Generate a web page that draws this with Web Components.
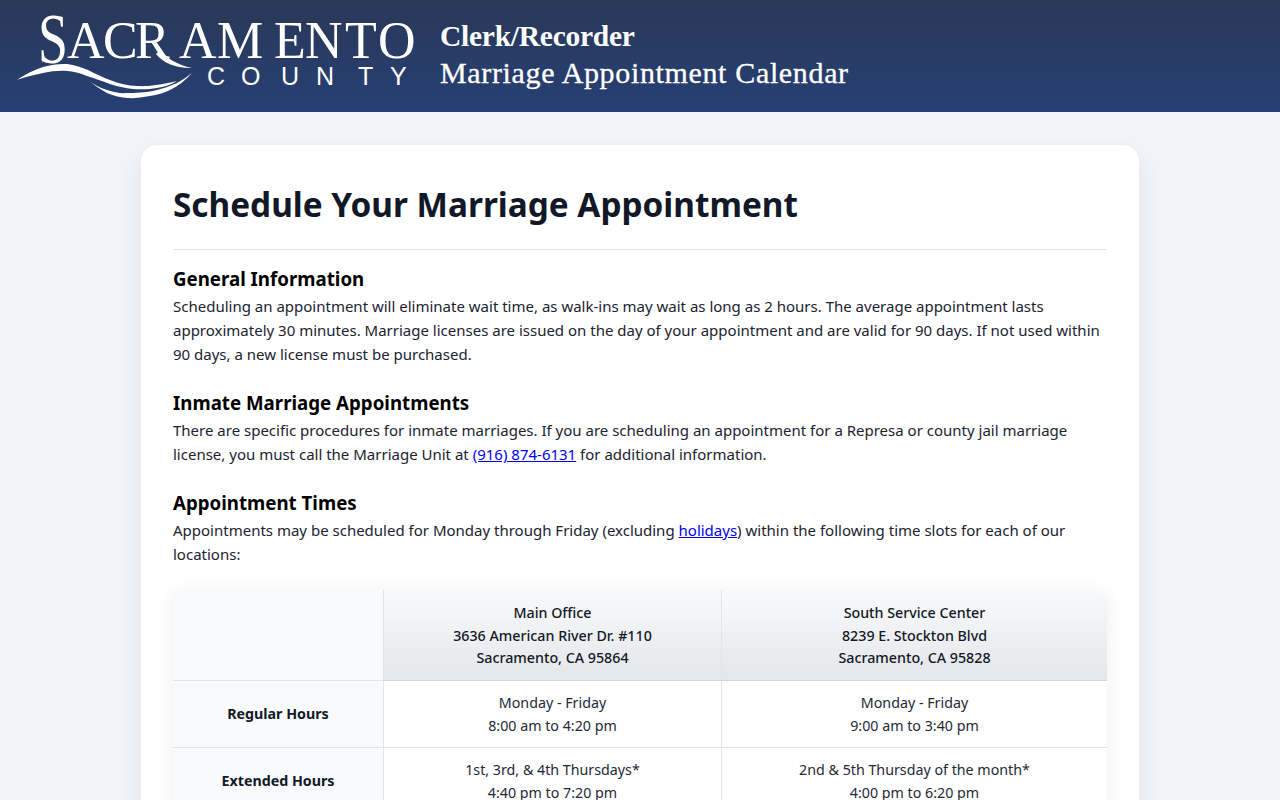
<!DOCTYPE html>
<html lang="en">
<head>
<meta charset="utf-8">
<title>Marriage Appointment Calendar</title>
<style>
	html, body { margin: 0; padding: 0; }
	body {
		background: #f3f4f9;
		font-family: "Noto Sans", "Open Sans", sans-serif;
		color: #111827;
	}
	a { color: #0000ee; }
</style>
</head>
<body>
<county-header>
	<span slot="dept">Clerk/Recorder</span>
	<span slot="app">Marriage Appointment Calendar</span>
</county-header>

<page-card>
	<span slot="title">Schedule Your Marriage Appointment</span>

	<info-section heading="General Information">Scheduling an appointment will eliminate wait time, as walk-ins may wait as long as 2 hours. The average appointment lasts approximately 30 minutes. Marriage licenses are issued on the day of your appointment and are valid for 90 days. If not used within 90 days, a new license must be purchased.</info-section>

	<info-section heading="Inmate Marriage Appointments">There are specific procedures for inmate marriages. If you are scheduling an appointment for a Represa or county jail marriage license, you must call the Marriage Unit at <a href="tel:9168746131">(916) 874-6131</a> for additional information.</info-section>

	<info-section heading="Appointment Times">Appointments may be scheduled for Monday through Friday (excluding <a href="#holidays">holidays</a>) within the following time slots for each of our locations:</info-section>

	<hours-table>
		<hours-cell kind="corner"></hours-cell>
		<hours-cell kind="head">Main Office<br>3636 American River Dr. #110<br>Sacramento, CA 95864</hours-cell>
		<hours-cell kind="head">South Service Center<br>8239 E. Stockton Blvd<br>Sacramento, CA 95828</hours-cell>

		<hours-cell kind="label">Regular Hours</hours-cell>
		<hours-cell>Monday - Friday<br>8:00 am to 4:20 pm</hours-cell>
		<hours-cell>Monday - Friday<br>9:00 am to 3:40 pm</hours-cell>

		<hours-cell kind="label">Extended Hours</hours-cell>
		<hours-cell>1st, 3rd, &amp; 4th Thursdays*<br>4:40 pm to 7:20 pm</hours-cell>
		<hours-cell>2nd &amp; 5th Thursday of the month*<br>4:00 pm to 6:20 pm</hours-cell>
	</hours-table>
</page-card>

<script>
(function() {
	const headerTemplate = document.createElement("template");
	headerTemplate.innerHTML = `
		<style>
		:host {
			display: flex;
			align-items: center;
			gap: 22px;
			height: 112px;
			padding-left: 16px;
			box-sizing: border-box;
			background: linear-gradient(180deg, #2a3857 0%, #264075 100%);
			color: #fff;
		}
		svg { display: block; flex: none; }
		.titles {
			display: flex;
			flex-direction: column;
			gap: 3px;
			font-family: "Liberation Serif", serif;
			font-size: 30px;
			line-height: 33px;
			margin-top: -3px;
		}
		.dept { font-size: 29.5px; font-weight: 700; letter-spacing: -0.25px; }
		.app { letter-spacing: 0.65px; -webkit-text-stroke: 0.3px #fff; }
		</style>
		<svg width="402" height="112" viewBox="16 0 402 112">
			<text x="38" y="63" textLength="30" lengthAdjust="spacingAndGlyphs" font-family="Liberation Serif" font-size="72" fill="#fff">S</text>
			<text x="67 103 135 179 217 274 305 345 378" y="58" font-family="Liberation Serif" font-size="52" fill="#fff">ACRAMENTO</text>
			<text x="207 241 281 316 358 390" y="85" font-family="Liberation Sans" font-size="25" fill="#fff">COUNTY</text>
			<!-- tail of the R -->
			<path fill="#fff" d="M160 50C167 58 177 65 192 68C176 68.500 163 63 156 54Z"/>
			<path fill="#fff" d="M17 79.700C26 74 34 70 43 67C52 64.500 60 63.500 67 64C75 65 82 67.500 88 70C96 74 103 77.500 110 80C119 83.500 128 86 137 86C146 86.500 155 86 177 81C170 85 164 87 157 88C149 89.500 141 89.500 133 89C125 88 117 86.500 110 84C102 81 94 78 87 76C80 73 73 71.500 67 71C59 70.500 51 71.500 43 73C34 75 26 77 17 79.700Z"/>
			<path fill="#fff" d="M88 80C94 84.500 100 88 107 90C114 92.500 121 93.500 127 93C136 93 145 92.500 153 91C162 89 170 86 177 83C182 80 187 77 192 73C186 80 178 86 170 90C164 93 157 95 150 96C142 97.500 134 98.500 127 98C119 97.500 113 95.500 107 93C100 89 94 85 88 80Z"/>
		</svg>
		<div class="titles">
			<span class="dept"><slot name="dept"></slot></span>
			<span class="app"><slot name="app"></slot></span>
		</div>
	`;

	class CountyHeader extends HTMLElement {
		constructor() {
			super();
			this.attachShadow({ mode: "open" }).appendChild(headerTemplate.content.cloneNode(true));
		}
	}
	customElements.define("county-header", CountyHeader);

	const cardTemplate = document.createElement("template");
	cardTemplate.innerHTML = `
		<style>
		:host {
			display: block;
			box-sizing: border-box;
			width: 998px;
			margin: 33px auto 32px;
			padding: 32px;
			background: #fff;
			border-radius: 16px;
			box-shadow: 0 10px 30px rgba(17, 24, 39, 0.08);
		}
		h1 {
			margin: 0 0 16px;
			padding-bottom: 18px;
			border-bottom: 1px solid #e2e4e8;
			font-size: 33.35px;
			line-height: 54px;
			font-weight: 700;
			color: #111827;
		}
		</style>
		<h1><slot name="title"></slot></h1>
		<slot></slot>
	`;

	class PageCard extends HTMLElement {
		constructor() {
			super();
			this.attachShadow({ mode: "open" }).appendChild(cardTemplate.content.cloneNode(true));
		}
	}
	customElements.define("page-card", PageCard);

	const sectionTemplate = document.createElement("template");
	sectionTemplate.innerHTML = `
		<style>
		:host {
			display: block;
			margin-bottom: 24px;
			font-size: 15px;
			line-height: 24px;
			color: #1b2330;
		}
		h2 {
			margin: 0;
			padding-bottom: 2px;
			font-size: 18.7px;
			line-height: 26px;
			font-weight: 700;
			color: #000;
		}
		</style>
		<h2></h2>
		<div><slot></slot></div>
	`;

	class InfoSection extends HTMLElement {
		constructor() {
			super();
			this.attachShadow({ mode: "open" }).appendChild(sectionTemplate.content.cloneNode(true));
		}
		connectedCallback() {
			this.shadowRoot.querySelector("h2").textContent = this.getAttribute("heading");
		}
	}
	customElements.define("info-section", InfoSection);

	const tableTemplate = document.createElement("template");
	tableTemplate.innerHTML = `
		<style>
		:host {
			display: grid;
			grid-template-columns: 210px 338px 386px;
			border-radius: 12px;
			overflow: hidden;
			box-shadow: 0 4px 20px rgba(17, 24, 39, 0.07);
		}
		</style>
		<slot></slot>
	`;

	class HoursTable extends HTMLElement {
		constructor() {
			super();
			this.attachShadow({ mode: "open" }).appendChild(tableTemplate.content.cloneNode(true));
		}
	}
	customElements.define("hours-table", HoursTable);

	const cellTemplate = document.createElement("template");
	cellTemplate.innerHTML = `
		<style>
		:host {
			display: flex;
			align-items: center;
			justify-content: center;
			box-sizing: border-box;
			min-height: 67px;
			padding: 11px 12px 9px;
			text-align: center;
			font-size: 14.25px;
			line-height: 22.7px;
			color: #1f2937;
			background: #fff;
			border-left: 1px solid #e2e4e8;
			border-bottom: 1px solid #e2e4e8;
		}
		:host([kind="corner"]), :host([kind="label"]) {
			background: #f9fafb;
			border-left: 0;
			padding: 10px 12px;
		}
		:host([kind="label"]) {
			font-weight: 700;
			color: #111827;
		}
		:host([kind="corner"]) { min-height: 91px; }
		:host([kind="head"]) {
			background: linear-gradient(180deg, #f9fafb 0%, #e4e6ea 100%);
			font-weight: 500;
			color: #111827;
			border-bottom-color: #d5d7dc;
		}
		</style>
		<div><slot></slot></div>
	`;

	class HoursCell extends HTMLElement {
		constructor() {
			super();
			this.attachShadow({ mode: "open" }).appendChild(cellTemplate.content.cloneNode(true));
		}
	}
	customElements.define("hours-cell", HoursCell);
})();
</script>
</body>
</html>
